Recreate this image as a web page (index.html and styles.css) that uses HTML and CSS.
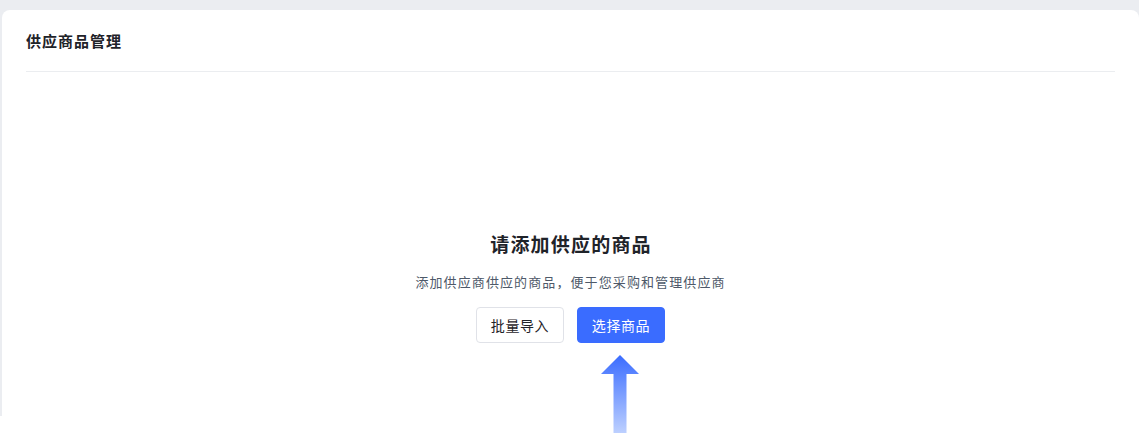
FILE: index.html
```html
<!DOCTYPE html>
<html lang="zh-CN">
<head>
<meta charset="utf-8">
<link rel="stylesheet" href="styles.css">
</head>
<body>
<div class="page">
  <div class="card">
    <div class="card-header">供应商品管理</div>
    <div class="empty">
      <div class="empty-title">请添加供应的商品</div>
      <div class="empty-desc">添加供应商供应的商品，便于您采购和管理供应商</div>
      <div class="actions">
        <button class="btn">批量导入</button>
        <button class="btn btn-primary">选择商品</button>
      </div>
    </div>
  </div>
</div>
<svg class="arrow" width="38" height="78" viewBox="0 0 38 78">
  <defs>
    <linearGradient id="ag" x1="0" y1="0" x2="0" y2="1">
      <stop offset="0" stop-color="#3a6cff"/>
      <stop offset="1" stop-color="#bdd0ff"/>
    </linearGradient>
  </defs>
  <path d="M19 0 L38 19 L25.5 19 L25.5 78 L12.5 78 L12.5 19 L0 19 Z" fill="url(#ag)"/>
</svg>
</body>
</html>
```
FILE: styles.css
```css
html, body {
  margin: 0;
  padding: 0;
  background: #ffffff;
  font-family: "Noto Sans CJK SC", "Noto Sans", sans-serif;
}
.page {
  height: 416px;
  box-sizing: border-box;
  padding: 10px 0 0 2px;
  background: #ebedf1;
  overflow: hidden;
}
.card {
  background: #ffffff;
  border-radius: 8px 8px 0 0;
  height: 440px;
  padding: 0 24px;
}
.card-header {
  height: 62px;
  box-sizing: border-box;
  padding-top: 20px;
  font-size: 15px;
  letter-spacing: 1px;
  font-weight: 700;
  line-height: 22px;
  color: #1f2329;
  border-bottom: 1px solid #ebedf0;
}
.empty {
  display: flex;
  flex-direction: column;
  align-items: center;
  padding-top: 159px;
}
.empty-title {
  font-size: 19px;
  letter-spacing: 1.2px;
  font-weight: 700;
  line-height: 26px;
  color: #1f2329;
  padding-left: 1px;
}
.empty-desc {
  margin-top: 15px;
  font-size: 13px;
  letter-spacing: 1.1px;
  line-height: 20px;
  color: #4e5969;
}
.actions {
  display: flex;
  gap: 13px;
  margin-top: 15px;
}
.btn {
  width: 88px;
  height: 36px;
  box-sizing: border-box;
  border: 1px solid #e0e2e8;
  border-radius: 4px;
  background: #ffffff;
  color: #1f2329;
  font-family: inherit;
  font-size: 14px;
  letter-spacing: 0.6px;
  font-weight: 400;
  cursor: pointer;
}
.btn-primary {
  background: #3a6cff;
  border-color: #3a6cff;
  color: #ffffff;
}
.arrow {
  position: absolute;
  left: 601px;
  top: 355px;
}
```
